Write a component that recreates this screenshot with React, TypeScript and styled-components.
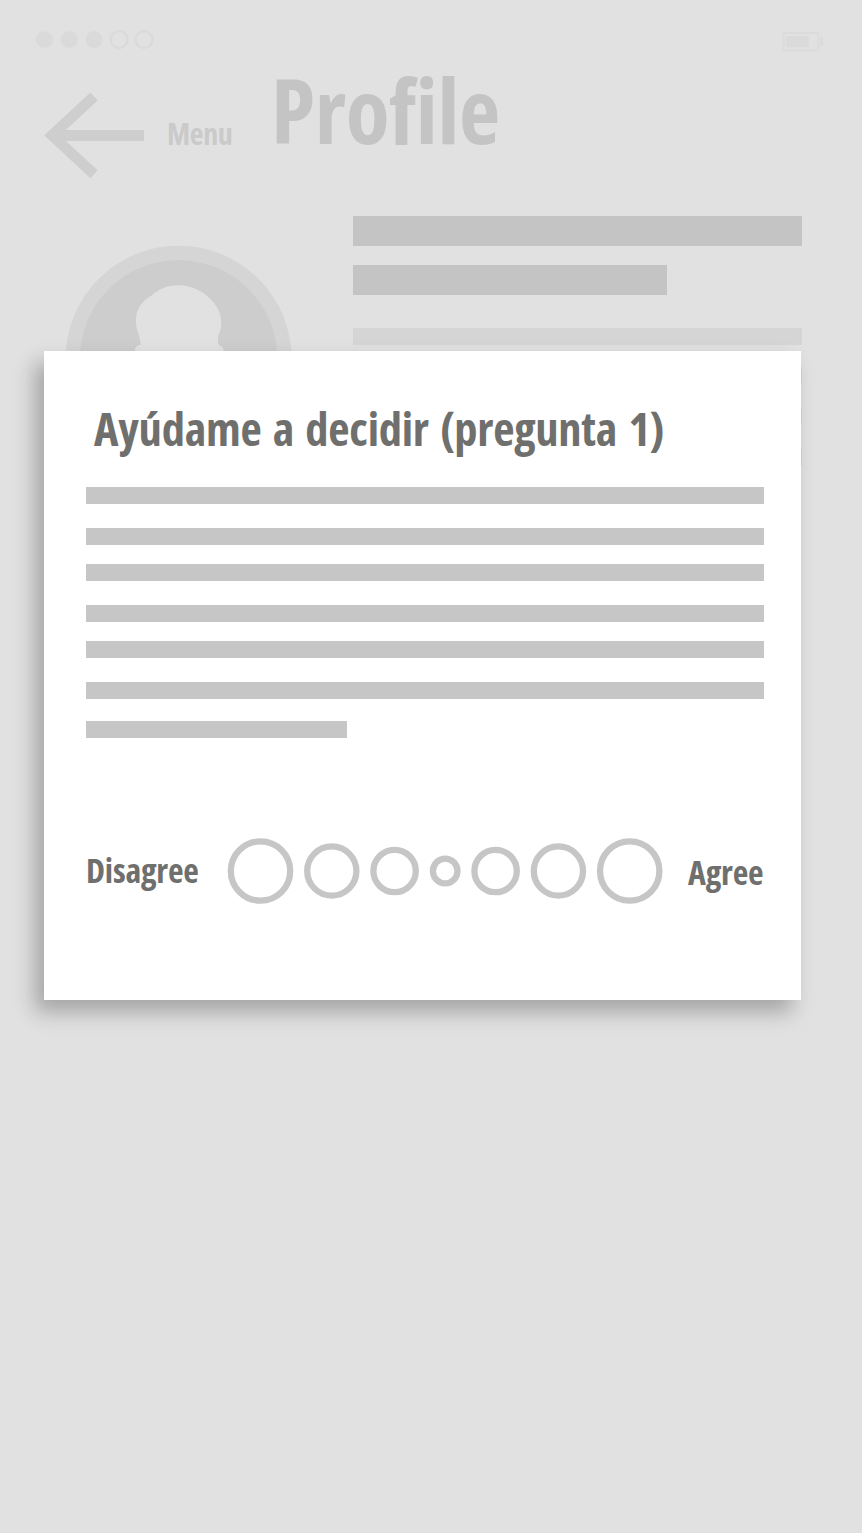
import React from "react";
import styled, { createGlobalStyle } from "styled-components";

const GlobalStyle = createGlobalStyle`
  *, *::before, *::after { box-sizing: border-box; }
  body { margin: 0; background: #e1e1e1; }
`;

const Screen = styled.main`
  position: relative;
  width: 862px;
  height: 1533px;
  overflow: hidden;
  background: #e1e1e1;
  font-family: "Open Sans", sans-serif;
  font-weight: 700;
  font-stretch: 75%;
`;

const StatusBar = styled.div`
  display: flex;
  justify-content: space-between;
  height: 62px;
  padding: 26px 36px 0 33px;
`;

const Header = styled.header`
  display: flex;
  height: 154px;
  padding-left: 44px;
`;

const BackArrow = styled.svg`
  display: block;
  flex: none;
  margin-top: 30px;
`;

const Label = styled.span<{ $size: number; $color?: string }>`
  display: block;
  flex: none;
  font-size: ${(p) => p.$size}px;
  line-height: 1.4;
  letter-spacing: -0.2px;
  white-space: nowrap;
  color: ${(p) => p.$color ?? "#6f6f6e"};
`;

const MenuLabel = styled(Label)`
  width: 104px;
  margin: 51px 0 0 23px;
  letter-spacing: -0.35px;
`;

const PageTitle = styled.h1`
  margin: -16px 0 0;
  font-size: 90px;
  font-weight: 700;
  line-height: 126px;
  letter-spacing: -0.3px;
  color: #c4c4c4;
  font-variant-ligatures: none;
`;

const Summary = styled.section`
  display: flex;
`;

const Avatar = styled.svg`
  display: block;
  flex: none;
  margin: 29px 60px 0 65px;
`;

const Lines = styled.div`
  display: flex;
  flex-direction: column;
`;

const Bar = styled.div<{ $w: number; $h: number; $gap: number; $color?: string }>`
  width: ${(p) => p.$w}px;
  height: ${(p) => p.$h}px;
  margin-bottom: ${(p) => p.$gap}px;
  background: ${(p) => p.$color ?? "#c6c6c6"};
`;

const Dialog = styled.section`
  position: absolute;
  left: 44px;
  top: 351px;
  width: 757px;
  height: 649px;
  padding: 45px 37px 0 42px;
  background: #fff;
  box-shadow: -9px 12px 20px rgba(0, 0, 0, 0.27);
`;

const Question = styled.h2`
  margin: 0 0 26px 8px;
  font-size: 46.5px;
  font-weight: 700;
  line-height: 65px;
  letter-spacing: -0.25px;
  word-spacing: 3.2px;
  white-space: nowrap;
  color: #6f6f6e;
`;

const Answer = styled.div`
  display: flex;
  align-items: center;
  height: 66px;
  margin-top: 100px;
`;

const Scale = styled.svg`
  display: block;
  flex: none;
`;

const DisagreeLabel = styled(Label)`
  width: 141px;
`;

const AgreeLabel = styled(Label)`
  margin: 4px 0 0 25px;
`;

const paragraph = [24, 19, 24, 19, 24, 22];

const choices = [
  { cx: 33.5, r: 29.7 },
  { cx: 104.8, r: 24.6 },
  { cx: 167.6, r: 21.2 },
  { cx: 218.2, r: 12.3 },
  { cx: 268.6, r: 21.2 },
  { cx: 331.4, r: 24.6 },
  { cx: 402.7, r: 29.7 },
];

export default function App() {
  return (
    <Screen>
      <GlobalStyle />
      <StatusBar>
        <svg width="124" height="28" viewBox="33 26 124 28" fill="#dadada">
          <circle cx="44.4" cy="39.5" r="8.6" />
          <circle cx="69.2" cy="39.5" r="8.6" />
          <circle cx="94.1" cy="39.5" r="8.6" />
          <g fill="none" stroke="#dadada" strokeWidth="2.4">
            <circle cx="119.1" cy="39.5" r="8.5" />
            <circle cx="144" cy="39.5" r="8.5" />
          </g>
        </svg>
        <svg width="46" height="30" viewBox="780 26 46 30" fill="#dadada">
          <rect x="783.7" y="33" width="34.6" height="17.6" rx="1" fill="none" stroke="#dbdbdb" strokeWidth="2" />
          <rect x="786.2" y="36" width="22.5" height="11.3" />
          <rect x="820.2" y="37" width="3" height="9.3" rx="1" />
        </svg>
      </StatusBar>
      <Header>
        <BackArrow width="100" height="88" viewBox="44 92 100 88">
          <path d="M44.2 135.3 90.4 92.6 97.6 100.6 65.8 130.1H144v10.8H65.8L97.6 170.2 90.4 178.2Z" fill="#cecece" />
        </BackArrow>
        <MenuLabel $size={30} $color="#cacaca">Menu</MenuLabel>
        <PageTitle>Profile</PageTitle>
      </Header>
      <Summary>
        <Avatar width="228" height="228" viewBox="65 245 228 228">
          <circle cx="178.6" cy="358.7" r="113" fill="#d5d5d5" />
          <circle cx="178.6" cy="358.7" r="98.7" fill="#cdcdcd" />
          <path
            d="M134.7 352C134.7 347.5 137 345 140.7 345C140 332 136 333 136 320C136 309 142 301 151 296C159 289 167 285.2 178.5 285.2C200 285.2 221.2 303 221.2 321.7C221.2 334 217.8 332 218 340C218 344 219 345.7 220 345.7C222.5 346 223.8 349 223.8 352L214 385H144Z"
            fill="#e1e1e1"
          />
        </Avatar>
        <Lines>
          <Bar $w={449} $h={30} $gap={19} $color="#c4c4c4" />
          <Bar $w={313.5} $h={29.5} $gap={33.5} $color="#c4c4c4" />
          <Bar $w={449} $h={17} $gap={22} $color="#d5d5d5" />
          <Bar $w={449} $h={17} $gap={24} $color="#d5d5d5" />
          <Bar $w={449} $h={17} $gap={24} $color="#d5d5d5" />
          <Bar $w={449} $h={17} $gap={0} $color="#d5d5d5" />
        </Lines>
      </Summary>
      <Dialog role="dialog">
        <Question>Ayúdame a decidir (pregunta 1)</Question>
        {paragraph.map((gap, i) => (
          <Bar key={i} $w={678} $h={17} $gap={gap} />
        ))}
        <Bar $w={261} $h={17} $gap={0} />
        <Answer>
          <DisagreeLabel $size={34}>Disagree</DisagreeLabel>
          <Scale width="436" height="66" viewBox="0 0 436 66" fill="none" stroke="#c6c6c6" strokeWidth="6.3">
            {choices.map((c) => (
              <circle key={c.cx} cx={c.cx} cy="33" r={c.r} />
            ))}
          </Scale>
          <AgreeLabel $size={34}>Agree</AgreeLabel>
        </Answer>
      </Dialog>
    </Screen>
  );
}
